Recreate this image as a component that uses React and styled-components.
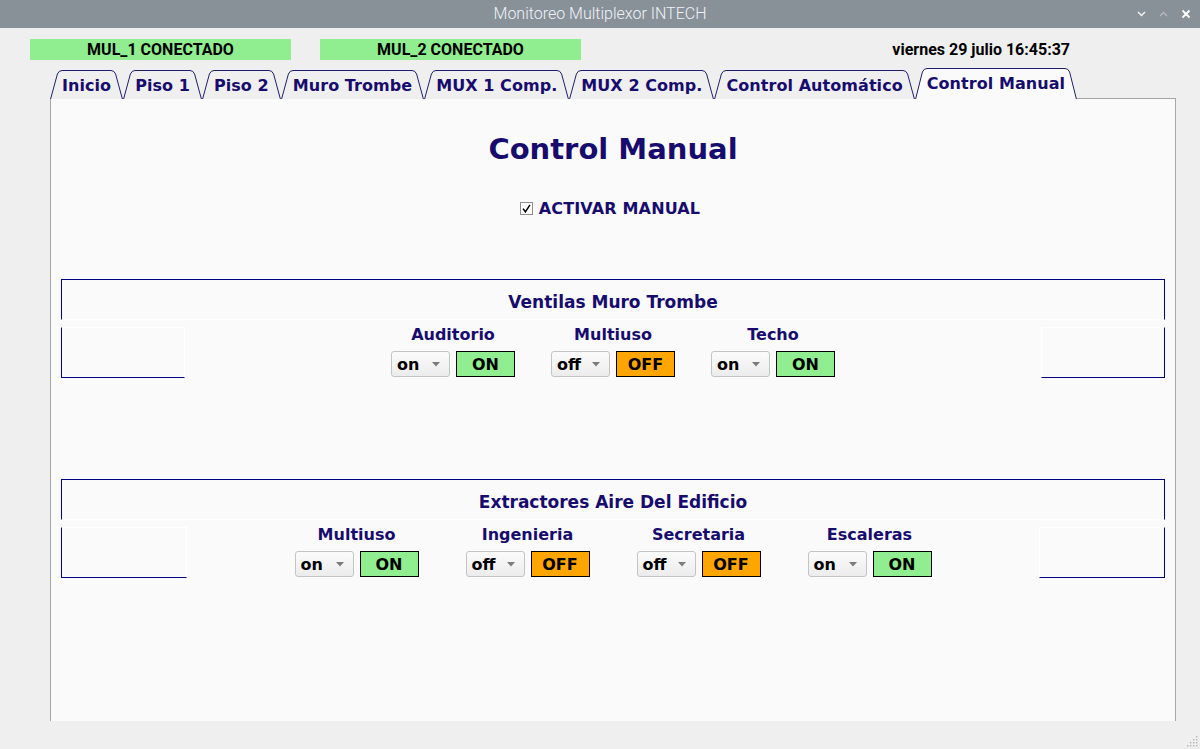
import React from 'react';
import styled, { createGlobalStyle } from 'styled-components';

const NAVY = '#170c6e';
const FRAME = '#000080';
const TAB_LINE = '#1f1d6b';

const tabs = [
  'Inicio',
  'Piso 1',
  'Piso 2',
  'Muro Trombe',
  'MUX 1 Comp.',
  'MUX 2 Comp.',
  'Control Automático',
  'Control Manual',
];

const ventilas = [
  { name: 'Auditorio', value: 'on' },
  { name: 'Multiuso', value: 'off' },
  { name: 'Techo', value: 'on' },
];

const extractores = [
  { name: 'Multiuso', value: 'on' },
  { name: 'Ingenieria', value: 'off' },
  { name: 'Secretaria', value: 'off' },
  { name: 'Escaleras', value: 'on' },
];

const GlobalStyle = createGlobalStyle`
  html, body {
    margin: 0;
    padding: 0;
    background: #efefef;
    overflow: hidden;
  }
  * {
    box-sizing: border-box;
  }
`;

const TabEdge = ({ side, height, fill }) => {
  const h = height;
  if (side === 'left') {
    return (
      <svg width="12" height={h} style={{ display: 'block', flex: 'none' }}>
        <path d={`M0 ${h} L7 4 Q8.5 0.5 12 0.5 L12 ${h} Z`} fill={fill} />
        <path d={`M0.6 ${h} L7.4 4 Q8.8 0.5 12 0.5`} fill="none" stroke={TAB_LINE} strokeWidth="1" />
      </svg>
    );
  }
  return (
    <svg width="12" height={h} style={{ display: 'block', flex: 'none' }}>
      <path d={`M0 0.5 Q3.5 0.5 5 4 L12 ${h} L0 ${h} Z`} fill={fill} />
      <path d={`M0 0.5 Q3.2 0.5 4.6 4 L11.4 ${h}`} fill="none" stroke={TAB_LINE} strokeWidth="1" />
    </svg>
  );
};

const Tab = ({ label, active }) => {
  const h = active ? 31 : 29;
  const fill = active ? '#fafafa' : '#efefef';
  return (
    <TabWrap>
      <TabEdge side="left" height={h} fill={fill} />
      <TabFace $active={active}>{label}</TabFace>
      <TabEdge side="right" height={h} fill={fill} />
    </TabWrap>
  );
};

const Combo = ({ value }) => (
  <ComboBox>
    <span>{value}</span>
    <svg width="8" height="5" viewBox="0 0 8 5">
      <path d="M0 0 L8 0 L4 4.5 Z" fill="#7c7c7c" />
    </svg>
  </ComboBox>
);

const Group = ({ name, value }) => (
  <GroupBox>
    <GroupLabel>{name}</GroupLabel>
    <Controls>
      <Combo value={value} />
      <StateBox $on={value === 'on'}>{value === 'on' ? 'ON' : 'OFF'}</StateBox>
    </Controls>
  </GroupBox>
);

const Section = ({ title, items, stub, gap, top }) => (
  <SectionBox $top={top}>
    <SectionHeader>{title}</SectionHeader>
    <SectionRow $stub={stub}>
      <Stub $side="left" />
      <Groups $gap={gap}>
        {items.map((it) => (
          <Group key={it.name} name={it.name} value={it.value} />
        ))}
      </Groups>
      <Stub $side="right" />
    </SectionRow>
  </SectionBox>
);

const App = () => (
  <Window>
    <GlobalStyle />
    <TitleBar>
      <span />
      <WindowTitle>Monitoreo Multiplexor INTECH</WindowTitle>
      <WindowButtons>
        <svg width="9" height="6" viewBox="0 0 9 6">
          <path d="M1 1 L4.5 4.5 L8 1" fill="none" stroke="#f2f4f6" strokeWidth="1.5" />
        </svg>
        <svg width="9" height="6" viewBox="0 0 9 6">
          <path d="M1 5 L4.5 1.5 L8 5" fill="none" stroke="#b4bac0" strokeWidth="1.3" />
        </svg>
        <svg width="10" height="10" viewBox="0 0 10 10">
          <path d="M1.5 1.5 L8.5 8.5 M8.5 1.5 L1.5 8.5" fill="none" stroke="#ffffff" strokeWidth="1.8" />
        </svg>
      </WindowButtons>
    </TitleBar>

    <StatusRow>
      <StatusBar>MUL_1 CONECTADO</StatusBar>
      <StatusBar>MUL_2 CONECTADO</StatusBar>
      <DateText>viernes 29 julio 16:45:37</DateText>
    </StatusRow>

    <TabBar>
      {tabs.map((t) => (
        <Tab key={t} label={t} active={t === 'Control Manual'} />
      ))}
      <TabFiller />
    </TabBar>

    <Panel>
      <PageTitle>Control Manual</PageTitle>
      <CheckRow>
        <CheckBox>
          <svg width="9" height="9" viewBox="0 0 9 9">
            <path d="M1 4.6 L3.4 7.8 L8 0.8" fill="none" stroke="#000" strokeWidth="1.5" />
          </svg>
        </CheckBox>
        <CheckLabel>ACTIVAR MANUAL</CheckLabel>
      </CheckRow>

      <Section title="Ventilas Muro Trombe" items={ventilas} stub={124} gap={36} top={61} />
      <Section title="Extractores Aire Del Edificio" items={extractores} stub={126} gap={47} top={101} />
    </Panel>

    <Footer>
      <svg width="12" height="12" viewBox="0 0 12 12">
        {[
          [10, 1],
          [7, 4], [10, 4],
          [4, 7], [7, 7], [10, 7],
          [1, 10], [4, 10], [7, 10], [10, 10],
        ].map(([x, y]) => (
          <rect key={`${x}-${y}`} x={x} y={y} width="1.4" height="1.4" fill="#b3b3b3" />
        ))}
      </svg>
    </Footer>
  </Window>
);

export default App;

const Window = styled.div`
  width: 1200px;
  height: 749px;
  display: flex;
  flex-direction: column;
  background: #efefef;
`;

const TitleBar = styled.div`
  height: 28px;
  flex: none;
  background: #889098;
  display: grid;
  grid-template-columns: 1fr auto 1fr;
  align-items: center;
`;

const WindowTitle = styled.div`
  font-family: Roboto, 'Liberation Sans', sans-serif;
  font-weight: 300;
  font-size: 16px;
  color: #eef3f8;
  line-height: 28px;
`;

const WindowButtons = styled.div`
  display: flex;
  justify-content: flex-end;
  align-items: center;
  gap: 13px;
  padding-right: 9px;
`;

const StatusRow = styled.div`
  display: flex;
  align-items: center;
  gap: 29px;
  height: 21px;
  margin-top: 11px;
  padding-left: 30px;
  flex: none;
`;

const StatusBar = styled.div`
  width: 261px;
  height: 21px;
  background: #90ee90;
  font-family: Roboto, 'Liberation Sans', sans-serif;
  font-weight: 700;
  font-size: 16px;
  color: #000;
  text-align: center;
  line-height: 21px;
`;

const DateText = styled.div`
  margin-left: auto;
  padding-right: 130px;
  font-family: Roboto, 'Liberation Sans', sans-serif;
  font-weight: 700;
  font-size: 16px;
  color: #000;
`;

const TabBar = styled.div`
  display: flex;
  align-items: flex-end;
  height: 31px;
  margin-top: 8px;
  margin-left: 50px;
  margin-right: 24px;
  flex: none;
`;

const TabWrap = styled.div`
  display: flex;
  align-items: flex-end;
`;

const TabFace = styled.div`
  height: ${(p) => (p.$active ? 31 : 29)}px;
  border-top: 1px solid ${TAB_LINE};
  background: ${(p) => (p.$active ? '#fafafa' : '#efefef')};
  font-family: 'DejaVu Sans', Verdana, sans-serif;
  font-weight: 700;
  font-size: 16px;
  letter-spacing: 0.06px;
  color: ${NAVY};
  display: flex;
  align-items: center;
  white-space: nowrap;
  padding-bottom: ${(p) => (p.$active ? 1 : 0)}px;
`;

const TabFiller = styled.div`
  flex: 1;
  height: 1px;
  background: #a5a5a5;
`;

const Panel = styled.div`
  height: 622px;
  margin: 0 24px 0 50px;
  flex: none;
  background: #fafafa;
  border-left: 1px solid #a6a6a6;
  border-right: 1px solid #a6a6a6;
  padding: 0 10px;
  display: flex;
  flex-direction: column;
  font-family: 'DejaVu Sans', Verdana, sans-serif;
`;

const PageTitle = styled.h1`
  margin: 33px 0 0;
  font-size: 29px;
  line-height: 34px;
  font-weight: 700;
  color: ${NAVY};
  text-align: center;
`;

const CheckRow = styled.div`
  margin-top: 32px;
  height: 20px;
  display: flex;
  justify-content: center;
  align-items: center;
  gap: 6px;
  padding-right: 6px;
`;

const CheckBox = styled.div`
  width: 13px;
  height: 13px;
  border: 1px solid #8e8e8e;
  background: #fff;
  display: flex;
  align-items: center;
  justify-content: center;
`;

const CheckLabel = styled.span`
  font-size: 16px;
  font-weight: 700;
  letter-spacing: 0.15px;
  color: ${NAVY};
`;

const SectionBox = styled.div`
  margin-top: ${(p) => p.$top}px;
  display: flex;
  flex-direction: column;
`;

const SectionHeader = styled.div`
  height: 41px;
  border: 1px solid ${FRAME};
  border-bottom: 1px solid #ffffff;
  padding-top: 13px;
  font-size: 17px;
  line-height: 19px;
  font-weight: 700;
  color: ${NAVY};
  text-align: center;
`;

const SectionRow = styled.div`
  display: grid;
  grid-template-columns: ${(p) => p.$stub}px 1fr ${(p) => p.$stub}px;
  align-items: start;
`;

const Stub = styled.div`
  margin-top: 7px;
  height: 51px;
  border-top: 1px solid #ffffff;
  border-bottom: 1px solid ${FRAME};
  border-left: 1px solid ${(p) => (p.$side === 'left' ? FRAME : '#ffffff')};
  border-right: 1px solid ${(p) => (p.$side === 'right' ? FRAME : '#ffffff')};
`;

const Groups = styled.div`
  display: flex;
  justify-content: center;
  gap: ${(p) => p.$gap}px;
  padding-top: 6px;
`;

const GroupBox = styled.div`
  display: flex;
  flex-direction: column;
  align-items: center;
  gap: 7px;
`;

const GroupLabel = styled.div`
  font-size: 16px;
  line-height: 18px;
  font-weight: 700;
  color: ${NAVY};
  white-space: nowrap;
`;

const Controls = styled.div`
  display: flex;
  gap: 6px;
`;

const ComboBox = styled.div`
  width: 59px;
  height: 26px;
  border: 1px solid #c4c4c4;
  border-radius: 3px;
  background: linear-gradient(#fbfbfb, #ececec);
  display: flex;
  align-items: center;
  justify-content: space-between;
  padding: 0 9px 0 5px;
  font-size: 16px;
  font-weight: 700;
  color: #000;
`;

const StateBox = styled.div`
  width: 59px;
  height: 26px;
  border: 1px solid #000;
  background: ${(p) => (p.$on ? '#90ee90' : '#ffa500')};
  display: flex;
  align-items: center;
  justify-content: center;
  font-size: 16px;
  font-weight: 700;
  color: #000;
`;

const Footer = styled.div`
  flex: 1;
  display: flex;
  justify-content: flex-end;
  align-items: flex-end;
  padding: 0 2px 2px 0;
`;
